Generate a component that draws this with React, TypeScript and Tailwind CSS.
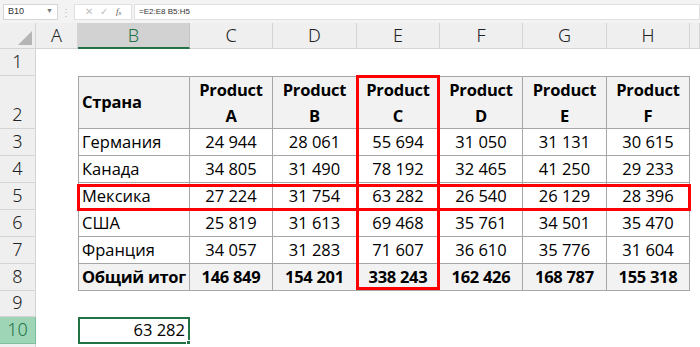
import React from "react";

const colW = [
  "w-[36px]",
  "w-[42px]",
  "w-[112px]",
  "w-[83px]",
  "w-[84px]",
  "w-[83px]",
  "w-[83px]",
  "w-[84px]",
  "w-[83px]",
  "w-[10px]",
];
const letters = ["", "A", "B", "C", "D", "E", "F", "G", "H", ""];

const rowH = [
  "h-[27px]",
  "h-[53px]",
  "h-[27px]",
  "h-[27px]",
  "h-[27px]",
  "h-[27px]",
  "h-[27px]",
  "h-[27px]",
  "h-[26px]",
  "h-[27px]",
];

const table = [
  ["Германия", "24 944", "28 061", "55 694", "31 050", "31 131", "30 615"],
  ["Канада", "34 805", "31 490", "78 192", "32 465", "41 250", "29 233"],
  ["Мексика", "27 224", "31 754", "63 282", "26 540", "26 129", "28 396"],
  ["США", "25 819", "31 613", "69 468", "35 761", "34 501", "35 470"],
  ["Франция", "34 057", "31 283", "71 607", "36 610", "35 776", "31 604"],
  ["Общий итог", "146 849", "154 201", "338 243", "162 426", "168 787", "155 318"],
];

const products = ["A", "B", "C", "D", "E", "F"];

const font = "font-['Open_Sans',sans-serif]";

const FormulaBar = () => (
  <div className="h-[23px] bg-[#f3f3f3] flex items-center">
    <div className="ml-[3px] w-[55px] h-[16px] bg-white border border-[#d6d6d6] flex items-center justify-between px-[4px]">
      <span className="text-[9px] text-[#333] font-['Liberation_Sans',sans-serif]">B10</span>
      <span className="text-[7px] text-[#777]">▼</span>
    </div>
    <div className="w-[16px] flex justify-center text-[#bbb] text-[10px] leading-none">⋮</div>
    <div className="w-[58px] h-[16px] bg-white border border-[#e0e0e0] flex items-center justify-around px-[6px] text-[#bdbdbd] text-[10px] font-['Liberation_Serif',serif]">
      <span>✕</span>
      <span>✓</span>
      <span className="italic text-[#555] text-[9px]">
        f<sub className="text-[6px]">x</sub>
      </span>
    </div>
    <div className="ml-[2px] flex-1 h-[16px] bg-white border border-[#e0e0e0] flex items-center px-[4px]">
      <span className="text-[8px] text-[#333] font-['Liberation_Sans',sans-serif]">=E2:E8 B5:H5</span>
    </div>
  </div>
);

const ColumnHeaders = () => (
  <div className="flex h-[26px]">
    {letters.map((l, i) => {
      if (i === 0)
        return (
          <div key={i} className={`${colW[i]} h-full bg-[#efefef] border-r border-b border-[#d4d4d4] relative`}>
            <svg className="absolute right-[3px] bottom-[3px]" width="14" height="14" viewBox="0 0 14 14">
              <polygon points="14,0 14,14 0,14" fill="#b5b5b5" />
            </svg>
          </div>
        );
      const sel = l === "B";
      return (
        <div
          key={i}
          className={`${colW[i]} h-full flex items-center justify-center text-[18px] font-light font-['Noto_Sans',sans-serif] ${
            sel
              ? "bg-[#d2d2d2] text-[#217346] border-b-2 border-b-[#217346] border-r border-r-[#c4c4c4]"
              : "bg-[#efefef] text-[#222] border-b border-r border-[#d4d4d4]"
          }`}
        >
          {l}
        </div>
      );
    })}
  </div>
);

const DataCell = ({ r, c }: { r: number; c: number }) => {
  // r: sheet row (1-based), c: column index in letters (2..8 = B..H)
  const inTable = r >= 2 && r <= 8 && c >= 2 && c <= 8;
  if (!inTable) {
    if (r === 10 && c === 2)
      return (
        <div className={`${colW[c]} h-full border-2 border-[#217346] relative flex items-center justify-end pr-[3px] text-[16.5px] text-black`}>
          63 282
          <div className="absolute right-[-3px] bottom-[-3px] w-[5px] h-[5px] bg-[#217346] border border-white" />
        </div>
      );
    return <div className={`${colW[c]} h-full`} />;
  }
  const border = `border-r border-b border-[#a6a6a6] ${c === 2 ? "border-l" : ""} ${r === 2 ? "border-t" : ""}`;
  if (r === 2) {
    return (
      <div className={`${colW[c]} h-full ${border} bg-[#f2f2f2] font-bold tracking-[-0.2px] text-[16.5px] text-black whitespace-nowrap flex ${c === 2 ? "items-center pl-[3px]" : "flex-col items-center justify-center leading-[26px]"}`}>
        {c === 2 ? (
          "Страна"
        ) : (
          <>
            <span>Product</span>
            <span>{products[c - 3]}</span>
          </>
        )}
      </div>
    );
  }
  const row = table[r - 3];
  const total = r === 8;
  return (
    <div
      className={`${colW[c]} h-full ${border} ${total ? "bg-[#f2f2f2] font-bold tracking-[-0.3px]" : "bg-white"} text-[16.5px] text-black whitespace-nowrap flex items-center ${
        c === 2 ? "pl-[3px]" : "justify-center"
      }`}
    >
      {row[c - 2]}
    </div>
  );
};

export default function App() {
  return (
    <div className={`w-[700px] h-[347px] overflow-hidden bg-white ${font}`}>
      <FormulaBar />
      <ColumnHeaders />
      <div className="relative">
        {rowH.map((h, idx) => {
          const r = idx + 1;
          const sel = r === 10;
          return (
            <div key={r} className={`flex ${h}`}>
              <div
                className={`${colW[0]} h-full flex items-end justify-center text-[18px] font-light font-['Noto_Sans',sans-serif] border-r border-b ${
                  sel ? "bg-[#9fd5b7] text-[#217346] border-[#7fbf99]" : "bg-[#efefef] text-[#222] border-[#d4d4d4]"
                }`}
              >
                {r}
              </div>
              {letters.slice(1).map((_, j) => (
                <DataCell key={j} r={r} c={j + 1} />
              ))}
            </div>
          );
        })}
        <div className="flex h-[10px]">
          <div className="w-[36px] h-full bg-[#efefef] border-r border-[#d4d4d4]" />
        </div>
        {/* red highlight: column E */}
        <div className="absolute left-[356px] top-[26px] w-[84px] h-[215px] border-[3px] border-[#ff0000] pointer-events-none" />
        {/* red highlight: row 5 */}
        <div className="absolute left-[77px] top-[135px] w-[614px] h-[27px] border-[3px] border-[#ff0000] pointer-events-none" />
      </div>
    </div>
  );
}
